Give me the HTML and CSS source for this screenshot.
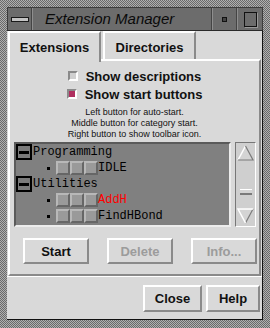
FILE: index.html
```html
<!DOCTYPE html>
<html lang="en">

<head>
    <meta charset="UTF-8">
    <title>Extension Manager</title>
    <link rel="stylesheet" href="styles.css">
</head>

<body>
    <div class="window">
        <div class="titlebar">
            <div class="tb-btn tb-menu"><span class="menu-bar"></span></div>
            <div class="tb-title">Extension Manager</div>
            <div class="tb-btn tb-min"><span class="min-dot"></span></div>
            <div class="tb-btn tb-max"><span class="max-box"></span></div>
        </div>

        <div class="client">
            <div class="tabs">
                <div class="tab active">Extensions</div>
                <div class="tab">Directories</div>
            </div>

            <div class="panel">
                <div class="checks">
                    <div class="check"><span class="indicator"></span>Show descriptions</div>
                    <div class="check"><span class="indicator on"></span>Show start buttons</div>
                </div>

                <div class="hint">
                    Left button for auto-start.<br>
                    Middle button for category start.<br>
                    Right button to show toolbar icon.
                </div>

                <div class="listrow">
                    <div class="list">
                        <div class="group"><span class="collapse"></span>Programming</div>
                        <div class="item"><span class="bullet"></span><span class="sb"></span><span class="sb"></span><span class="sb"></span>IDLE</div>
                        <div class="group"><span class="collapse"></span>Utilities</div>
                        <div class="item"><span class="bullet"></span><span class="sb"></span><span class="sb"></span><span class="sb"></span><span class="red">AddH</span></div>
                        <div class="item"><span class="bullet"></span><span class="sb"></span><span class="sb"></span><span class="sb"></span>FindHBond</div>
                    </div>
                    <div class="scroll">
                        <svg class="arrow" width="17" height="16" viewBox="0 0 17 16">
                            <polygon points="8.5,1 16,15 1,15" fill="#d4d4d4" />
                            <polyline points="1,15 8.5,1" stroke="#fff" stroke-width="1.5" fill="none" />
                            <polyline points="8.5,1 16,15 1,15" stroke="#7a7a7a" stroke-width="1.2" fill="none" />
                        </svg>
                        <div class="track"><span class="thumb"></span></div>
                        <svg class="arrow" width="17" height="16" viewBox="0 0 17 16">
                            <polygon points="1,1 16,1 8.5,15" fill="#d4d4d4" />
                            <polyline points="16,1 8.5,15" stroke="#7a7a7a" stroke-width="1.2" fill="none" />
                            <polyline points="8.5,15 1,1 16,1" stroke="#fff" stroke-width="1.5" fill="none" />
                        </svg>
                    </div>
                </div>

                <div class="actions">
                    <button class="btn">Start</button>
                    <button class="btn off">Delete</button>
                    <button class="btn off">Info...</button>
                </div>
            </div>

            <div class="footer">
                <button class="btn close">Close</button>
                <button class="btn help">Help</button>
            </div>
        </div>
    </div>
</body>

</html>
```

FILE: styles.css
```css
body {
    margin: 0;
    background-color: #d9d9d9;
    font-family: "Liberation Sans", Arial, sans-serif;
}

.window {
    width: 270px;
    height: 328px;
    box-sizing: border-box;
    padding: 7px 7px 8px 7px;
    display: flex;
    flex-direction: column;
    background-color: #8a8a8a;
    background-image: repeating-conic-gradient(#b0b0b0 0 25%, #6a6a6a 0 50%);
    background-size: 2px 2px;
}

/* title bar */
.titlebar {
    height: 23px;
    display: flex;
    background-color: #6c6c6c;
    border-top: 1px solid #3c3c3c;
    border-left: 1px solid #3c3c3c;
    border-right: 1px solid #3c3c3c;
    box-sizing: border-box;
}

.tb-btn {
    display: flex;
    justify-content: center;
    align-items: center;
    border-left: 1px solid #8e8e8e;
    border-right: 1px solid #444;
}

.tb-menu {
    width: 23px;
    border-left: none;
}

.menu-bar {
    width: 16px;
    height: 3px;
    background-color: #c4c4c4;
    border: 1px solid #1a1a1a;
}

.tb-title {
    flex: 1;
    padding-left: 12px;
    font-size: 15px;
    font-style: italic;
    line-height: 21px;
    color: #0a0a0a;
    border-left: 1px solid #8e8e8e;
    border-right: 1px solid #444;
}

.tb-min {
    width: 23px;
}

.min-dot {
    width: 3px;
    height: 3px;
    background-color: #444;
    border: 1px solid #111;
}

.tb-max {
    width: 24px;
    border-right: none;
}

.max-box {
    width: 11px;
    height: 13px;
    border: 1px solid #111;
    box-shadow: 1px 1px 0 #999;
}

/* client area */
.client {
    flex: 1;
    display: flex;
    flex-direction: column;
    background-color: #d9d9d9;
    border-right: 1px solid #111;
    border-bottom: 1px solid #111;
    border-top: 1px solid #2a2a2a;
}

.tabs {
    display: flex;
    height: 30px;
    margin-left: 1px;
    gap: 2px;
}

.tab {
    width: 93px;
    box-sizing: border-box;
    padding-top: 7px;
    text-align: center;
    font-size: 13px;
    font-weight: bold;
    color: #111;
    border-top: 2px solid #fff;
    border-left: 2px solid #fff;
    border-right: 2px solid #8a8a8a;
}

.tab.active {
    height: 31px;
    margin-bottom: -1px;
    position: relative;
    background-color: #d9d9d9;
}

.tab:not(.active) {
    border-bottom: 2px solid #fff;
}

.panel {
    margin-left: 1px;
    margin-right: 1px;
    border-top: 2px solid #fff;
    border-left: 2px solid #fff;
    border-right: 2px solid #8a8a8a;
    border-bottom: 2px solid #8a8a8a;
    display: flex;
    flex-direction: column;
    height: 217px;
    box-sizing: border-box;
}

.tabs + .panel {
    margin-top: -2px;
}

.checks {
    display: flex;
    flex-direction: column;
    align-items: center;
    margin-top: 6px;
}

.check {
    display: flex;
    align-items: center;
    height: 18px;
    font-size: 13px;
    font-weight: bold;
    color: #111;
}

.indicator {
    width: 6px;
    height: 6px;
    margin-right: 8px;
    background-color: #d0d0d0;
    border-top: 2px solid #8a8a8a;
    border-left: 2px solid #8a8a8a;
    border-right: 2px solid #fff;
    border-bottom: 2px solid #fff;
}

.indicator.on {
    background-color: #b03060;
}

.hint {
    margin-top: 4px;
    text-align: center;
    font-size: 9px;
    line-height: 11px;
    color: #111;
}

.listrow {
    display: flex;
    gap: 4px;
    margin: 2px 3px 0 4px;
    height: 85px;
}

.list {
    flex: 1;
    background-color: #808080;
    border-top: 2px solid #5a5a5a;
    border-left: 2px solid #5a5a5a;
    border-right: 2px solid #ececec;
    border-bottom: 2px solid #ececec;
    font-family: "Liberation Mono", "Courier New", monospace;
    font-size: 12px;
    color: #000;
}

.group {
    display: flex;
    align-items: center;
    height: 16px;
}

.collapse {
    width: 12px;
    height: 12px;
    border: 2px solid #000;
    background-color: #7a7a7a;
    margin-right: 1px;
    position: relative;
}

.collapse::after {
    content: "";
    position: absolute;
    left: 1px;
    top: 5px;
    width: 10px;
    height: 3px;
    background-color: #000;
}

.item {
    display: flex;
    align-items: center;
    height: 16px;
    padding-left: 31px;
}

.bullet {
    width: 3px;
    height: 3px;
    background-color: #000;
    margin-right: 6px;
}

.sb {
    width: 10px;
    height: 10px;
    background-color: #9a9a9a;
    border-top: 2px solid #b8b8b8;
    border-left: 2px solid #b8b8b8;
    border-right: 2px solid #666;
    border-bottom: 2px solid #666;
}

.red {
    color: #ff0000;
}

.scroll {
    width: 21px;
    box-sizing: border-box;
    display: flex;
    flex-direction: column;
    align-items: center;
    padding: 2px 0;
    background-color: #cfcfcf;
    border-top: 1px solid #777;
    border-left: 1px solid #777;
    border-right: 1px solid #fff;
    border-bottom: 1px solid #fff;
}

.track {
    flex: 1;
    width: 100%;
    display: flex;
    justify-content: center;
    align-items: flex-end;
    padding-bottom: 13px;
}

.thumb {
    width: 12px;
    height: 3px;
    background-color: #d4d4d4;
    border-top: 1px solid #fff;
    border-bottom: 2px solid #7a7a7a;
}

.actions {
    display: flex;
    gap: 18px;
    margin: 11px 0 0 13px;
}

.btn {
    width: 66px;
    height: 26px;
    box-sizing: border-box;
    padding: 0;
    background-color: #d9d9d9;
    font-family: "Liberation Sans", Arial, sans-serif;
    font-size: 13px;
    font-weight: bold;
    color: #111;
    border-top: 2px solid #fff;
    border-left: 2px solid #fff;
    border-right: 2px solid #8a8a8a;
    border-bottom: 2px solid #8a8a8a;
}

.btn.off {
    color: #9c9c9c;
}

.footer {
    flex: 1;
    display: flex;
    justify-content: flex-end;
    align-items: center;
    gap: 4px;
    padding-right: 2px;
    border-top: 1px solid #fff;
}

.close {
    width: 59px;
    height: 27px;
}

.help {
    width: 54px;
    height: 27px;
}
```
